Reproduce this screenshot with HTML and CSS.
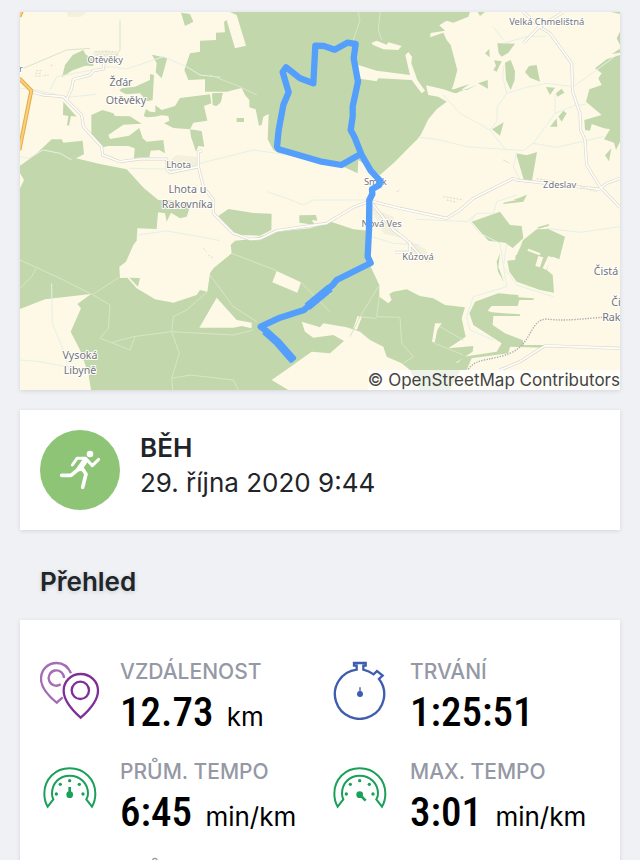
FILE: index.html
```html
<!DOCTYPE html>
<html lang="cs">
<head>
<meta charset="utf-8">
<meta name="viewport" content="width=device-width, initial-scale=1">
<title>Běh</title>
<link rel="stylesheet" href="styles.css">
</head>
<body>
<main class="page">
  <section class="card map" aria-label="Mapa trasy">
    <svg class="map-canvas" viewBox="60 36 1800 1134" role="img" aria-label="Trasa běhu">
      <g class="wood">
        <!-- northern forest -->
        <path d="M690 36H1410L1405 50 1360 68 1340 62 1318 76 1335 92 1292 99 1290 112 1330 98 1340 120 1352 135 1372 210 1360 255 1355 268 1400 270 1432 255 1365 280 1340 305 1310 328 1285 358 1262 405 1252 418 1210 460 1185 485 1140 525 1110 505 1075 480 1073 520 1030 500 960 490 835 458 820 450 803 418 806 342 790 350 785 374 777 378 767 328 748 322 748 300 735 285 725 264 680 275H615V238L565 240 553 210 570 160 600 155V122L648 120V98L675 97 672 65 680 60 705 145 738 137 710 45Z"/>
        <!-- southern forest -->
        <path d="M60 497L105 465 155 418 185 418 190 428 248 422 252 463 228 475 300 492 380 508 432 565 475 600 500 600 530 604 570 620 560 650 540 655 513 638 500 665 495 640 474 637 470 687 412 685 410 722 400 735 378 785 358 800 360 834 382 833 410 865 465 898 520 908 590 885 600 870 622 875 630 820 640 805 695 760 692 735 705 722 750 718 830 695 930 685 995 666 1060 688 1105 692 1112 800 1138 855V890L1165 910 1175 900 1168 882 1180 875 1220 868 1260 888 1300 895 1335 915 1395 922 1385 955 1397 1010 1345 1045 1420 1038 1418 1055 1365 1090 1400 1080 1375 1120 1350 1170H1260L1230 1110 1205 1090 1160 1070 1150 1040 1110 1020 1080 995 1040 982 970 970 960 982 905 965 915 995 940 1013 1000 1005 1032 1023 990 1060 935 1055 900 1080 875 1098 815 1140 865 1170H273L265 1120 240 1050 212 995 243 925 232 912 273 882 135 898 60 927Z"/>
        <path d="M186 232L195 195 218 165 250 150 256 163 280 178 280 198 255 197 215 212ZM190 305L230 350 213 348 207 378 201 375 205 348 189 345ZM543 38L570 42 580 65 555 78ZM456 164L502 174 485 235 467 217 470 190ZM450 222L462 225 458 300 440 304 420 280 378 283 358 272 365 265 405 260 450 240ZM274 345L308 330 340 340 345 348 390 349 425 371 370 374 325 405 330 417 387 407 418 384 428 415 440 425 490 420 495 460 478 450 452 452 448 472 402 474 404 445 385 438 325 438 308 442 274 408ZM485 330L525 318 540 294 630 283 634 310 612 318 622 362 580 368 570 388 520 384 492 370 508 362 505 348 485 346 464 350 440 352 431 348 438 327 450 335 466 337 466 316ZM570 388L605 393 613 440 595 438 588 455 573 410ZM636 280H668L663 305 650 318 638 315Z"/>
      </g>
      <g class="wood" transform="translate(630 0)"><path d="M80 354H102V366H80Z"/></g>
      <g class="wood" transform="translate(1260 0)">
        <path d="M173 36H195L180 48ZM195 160L208 147 209 172ZM232 130L285 131 265 158 245 170 236 160ZM222 181L245 184 230 215 220 210 228 197ZM255 188L272 180 285 213 284 240 272 270 258 240ZM327 198L350 195 360 245 330 233 315 216ZM174 250L203 240 204 266ZM95 270L148 252 110 280ZM378 261L405 263 390 285ZM408 280L425 266 433 278 412 290ZM216 388L251 367 240 407ZM415 350L430 332 440 340 425 365ZM390 380L410 355 412 380ZM288 460L320 466 351 456 336 542H312ZM555 466L574 445 567 484ZM573 36H600V42ZM575 162L600 146V158ZM590 115L600 95V135ZM600 165L560 178 525 205 545 220 535 235 545 255 508 268 498 305 545 345 493 360 495 390 510 392 515 372 552 385 570 388 552 418 582 428 588 450 600 425ZM280 600L320 585 312 600Z"/>
      </g>
      <g class="wood" transform="translate(630 570)">
        <path d="M25 78L55 57 130 69 185 71 184 120 150 137 80 134 52 110ZM268 76L318 75 322 92 305 90 315 105 268 98Z"/>
      </g>
      <g class="wood" transform="translate(1260 570)">
        <path d="M155 95L240 65 270 105 305 108 310 145 278 174 255 158 205 152ZM310 150L350 118 385 117 435 140 418 208 398 200 380 240 398 255 402 308 360 300 290 275 268 245 262 212 285 210 290 180ZM352 112L387 102 386 108 355 116ZM250 38L290 30 320 15 310 35 250 42ZM240 190L235 230 252 276 234 245 230 215ZM235 310L295 315V322L342 325 340 330 298 330 293 348 215 348 203 362 215 367 300 373V378L220 378 218 405 255 430 308 450 312 465 375 465 370 473 270 470 265 490 155 505 140 540 95 540 130 500 230 485 245 460 160 405 148 370 165 335Z"/>
      </g>
      <g class="field">
        <path d="M1115 128L1130 122 1160 134 1165 127 1205 138 1195 150 1150 148 1118 134ZM1075 195L1130 212 1230 225 1216 165 1225 156 1236 170 1234 190 1252 240 1275 272 1265 280 1235 240 1135 235 1130 244 1070 235ZM1278 256L1330 268 1365 280 1400 290 1340 305 1315 290 1285 285ZM598 983L650 893 710 960 755 968V985L725 978 700 983ZM830 813L903 847 892 878 817 847ZM980 856L995 870 990 884 977 872ZM1073 948L1086 950 1070 990 1060 985ZM1305 970L1325 970 1312 990 1304 1028 1296 1025ZM60 520L72 540 60 565Z"/>
        <path d="M640 280L668 278 660 310 645 318Z" class="wood"/>
        <path d="M325 176L362 190 358 196 322 182ZM355 198L370 202 360 232 346 228ZM385 198L400 203 378 240 368 234ZM270 195L308 155 290 195Z" transform="translate(1260 570)"/>
      </g>
      <path class="wood" d="M388 833L420 834 414 860Z"/>
      <!-- village footprints -->
      <g class="built">
        <path d="M200 36H260L240 52 205 50ZM278 155L320 150 355 160 350 190 290 190ZM500 490L530 465 590 470 595 505 510 520ZM1110 622L1180 650 1205 715 1150 700ZM1225 720L1280 750 1290 790 1240 770Z"/>
      </g>
      <!-- streams and tracks -->
      <g class="stream">
        <path d="M60 265L100 268 200 292 290 283M150 270L170 230 330 200 380 207 490 170 560 200 600 225 660 232M60 470L85 475 130 450 180 460 215 480M390 505L530 508 600 490 760 450 900 470M1260 412L1320 420 1400 440 1570 452 1600 430 1670 442 1810 410M1512 195L1508 230 1520 280 1580 262 1640 250 1720 260 1790 210 1850 165M1520 280L1492 320 1490 365 1470 390 1380 340 1330 285M1470 390L1518 450M1665 280V340L1600 430M1665 340L1720 318 1760 312M1550 460L1540 500 1560 540M1510 120L1480 80M1510 130L1580 110 1640 108M410 705L500 693 600 710 660 722M60 1080L120 1085 250 1110M155 850L157 970 190 1050 210 1120M800 575L860 595 910 615 940 600 1100 600M1115 710L1180 730 1260 735M1250 658L1400 665 1430 640 1480 640 1490 605 1550 585M1430 640L1410 665 1440 700 1500 730 1520 860 1420 890 1400 950 1410 990 1480 1020M1520 730L1510 800 1550 855 1660 890M1640 685L1740 697 1860 680"/>
      </g>
      <g class="track">
        <path d="M60 780L180 835 280 885 330 915 325 985 300 1015 335 1028 400 1010 515 995 700 1005 760 990M60 865L95 830 108 805M280 882L358 832M335 1028L390 1050 405 1010M515 995L538 1060 515 1135 518 1170M515 995L520 950 560 930 622 875M515 1135L570 1125 700 1140 715 1170M695 760L830 812M630 825L700 920 770 965M903 847L990 935M1135 860L1080 950 1050 1010M1138 890L1130 950 1200 952 1205 1030 1240 1070 1210 1090M1075 950L1130 955M1080 60L1060 120 1060 160M1075 36L1080 60M1140 36L1135 90 1145 120M630 225L720 260 770 285M360 60V150L330 190M70 205L200 150 270 145M1304 1030L1390 1065M1320 980L1390 1020"/>
      </g>
      <!-- roads -->
      <g>
        <path class="road-casing" d="M95 275L130 285 190 290 245 345 250 380 305 440 308 465 360 485 420 477 500 477 502 510 510 518 595 500 610 560 640 600 640 640 700 700 750 718 780 716 830 692 980 670 1060 622 1110 603 1200 625 1340 655 1380 630 1420 595 1540 535 1550 540 1800 568M200 298L215 265 220 238 270 225 280 212 310 207 312 190M595 500L595 455 607 452M1570 130L1618 80 1650 100 1715 190 1718 275 1740 340 1742 390 1755 420 1760 495 1800 560 1860 622M1620 80L1570 36M1620 80L1690 36M1800 565L1820 550 1860 535M1500 1110L1560 1085 1635 1037 1860 1045M1110 603L1180 690 1220 720 1260 765M1185 757H1230L1230 725"/>
        <path class="road" d="M95 275L130 285 190 290 245 345 250 380 305 440 308 465 360 485 420 477 500 477 502 510 510 518 595 500 610 560 640 600 640 640 700 700 750 718 780 716 830 692 980 670 1060 622 1110 603 1200 625 1340 655 1380 630 1420 595 1540 535 1550 540 1800 568M200 298L215 265 220 238 270 225 280 212 310 207 312 190M595 500L595 455 607 452M1570 130L1618 80 1650 100 1715 190 1718 275 1740 340 1742 390 1755 420 1760 495 1800 560 1860 622M1620 80L1570 36M1620 80L1690 36M1800 565L1820 550 1860 535M1500 1110L1560 1085 1635 1037 1860 1045M1110 603L1180 690 1220 720 1260 765M1185 757H1230L1230 725"/>
        <path class="main-casing" d="M58 235L94 272 58 450M58 50L67 30"/>
        <path class="main-road" d="M58 235L94 272 58 450M58 50L67 30"/>
        <path class="rail" d="M1405 1108C1430 1070 1480 1085 1540 1055C1600 1020 1590 960 1640 957C1700 965 1750 955 1860 948"/>
      </g>
      <g class="houses">
        <path d="M108 212H128M106 220H126M106 228H128M132 226H146M152 196H162M285 155L350 155M290 165L355 165M610 745L620 755M625 765L640 775M1330 590L1390 600M1340 600L1370 607M1510 480L1530 490M1610 536L1670 545M1740 560L1790 575M1190 575L1200 570"/>
      </g>
      <g class="labels">
        <text x="316" y="189">Otěvěky</text>
        <text class="area" x="363" y="259">Žďár</text>
        <text class="area" x="378" y="311">Otěvěky</text>
        <text x="536" y="504">Lhota</text>
        <text class="area" x="562" y="580">Lhota u</text>
        <text class="area" x="562" y="624">Rakovníka</text>
        <text x="63" y="216">r</text>
        <text x="1640" y="75">Velká Chmelištná</text>
        <text x="1679" y="565">Zdeslav</text>
        <text x="1126" y="554">Smrk</text>
        <text x="1145" y="680">Nová Ves</text>
        <text x="1254" y="780">Kůzová</text>
        <text class="area" x="240" y="1076">Vysoká</text>
        <text class="area" x="240" y="1121">Libyně</text>
        <text class="area" x="1818" y="824">Čistá</text>
        <text class="area" x="1848" y="917">Či</text>
        <text class="area" x="1834" y="962">Rak</text>
      </g>
      <path class="route" d="M882 1083L832 1025 795 990 782 980 840 953 912 930 960 886 998 855 1010 840 1112 789 1103 770 1107 690 1108 600 1117 582 1116 568 1138 555 1140 542 1112 512 1085 465 1063 410 1052 390 1058 350V320L1074 245 1061 175 1067 132 1042 128 1004 149 972 138 946 137 940 250 900 235 858 202 848 216 866 277 850 315 836 390 831 440 836 448 960 484 1024 495 1082 462"/>
      <path class="route-tail" d="M795 993L832 1026 880 1081M922 920L960 889 990 864"/>
    </svg>
    <div class="attribution">© OpenStreetMap Contributors</div>
  </section>

  <header class="card activity">
    <svg class="activity-icon" viewBox="60 90 240 240" aria-hidden="true">
      <circle cx="180" cy="210" r="120" fill="#8dc476"/>
      <circle cx="210" cy="162" r="10" fill="#fff"/>
      <g fill="none" stroke="#fff" stroke-linecap="round" stroke-linejoin="round">
        <path stroke-width="9" d="M157 195L171 175H197L217 197L236 178"/>
        <path stroke-width="11" d="M125 226H153L176 207L184 202L198 222L188 262"/>
        <path stroke-width="17" d="M194 184L179 205"/>
      </g>
    </svg>
    <div class="activity-text">
      <h1 class="activity-title">BĚH</h1>
      <time class="activity-date" datetime="2020-10-29T09:44">29. října 2020 9:44</time>
    </div>
  </header>

  <h2 class="section-title">Přehled</h2>

  <section class="card stats">
    <div class="stat">
      <svg class="stat-icon" viewBox="60 330 180 180" fill="none" stroke-width="7" aria-hidden="true">
        <g stroke="#a56db5">
          <path d="M153 370C144 350 129 339 110 339C82 339 63 360 63 387C63 410 82 435 110 458L128 442"/>
          <path d="M132 384A23 23 0 1 0 122 403"/>
        </g>
        <g stroke="#7f3097">
          <path d="M182 372C153 372 131 394 131 422C131 448 152 476 182 503C213 476 234 448 234 422C234 394 211 372 182 372Z"/>
          <circle cx="181" cy="421" r="26"/>
        </g>
      </svg>
      <div class="stat-text">
        <div class="stat-label">VZDÁLENOST</div>
        <div class="stat-value">12.73 <span class="unit">km</span></div>
      </div>
    </div>
    <div class="stat">
      <svg class="stat-icon" viewBox="30 60 180 180" fill="none" stroke="#3f5dae" stroke-width="7" aria-hidden="true">
        <path d="M110 89A74 74 0 1 0 177 117L188 107L171 93L161 103Q147 93 130 89V77H137V69H102V77H110V92"/>
        <circle cx="120" cy="162" r="9" fill="#3f5dae" stroke="none"/>
        <path stroke-width="4" d="M120 142V162"/>
      </svg>
      <div class="stat-text">
        <div class="stat-label">TRVÁNÍ</div>
        <div class="stat-value">1:25:51</div>
      </div>
    </div>
    <div class="stat">
      <svg class="stat-icon" viewBox="60 60 180 180" fill="none" stroke="#1aa159" stroke-width="6" aria-hidden="true">
        <path d="M83 200C76 188 73 176 73 161C73 117 106 85 149 85C192 85 226 117 226 161C226 176 223 188 216 200L199 178Q204 170 204 161C204 130 180 107 149 107C118 107 96 130 96 161Q96 170 100 178Z"/>
        <g fill="#1aa159" stroke="none">
          <circle cx="109" cy="162" r="5"/><circle cx="121" cy="133" r="5"/><circle cx="149" cy="122" r="5"/><circle cx="178" cy="133" r="5"/><circle cx="189" cy="162" r="5"/>
          <circle cx="149" cy="164" r="10"/>
        </g>
        <path stroke-width="8" d="M149 141V164"/>
      </svg>
      <div class="stat-text">
        <div class="stat-label">PRŮM. TEMPO</div>
        <div class="stat-value">6:45 <span class="unit">min/km</span></div>
      </div>
    </div>
    <div class="stat">
      <svg class="stat-icon" viewBox="60 60 180 180" fill="none" stroke="#1aa159" stroke-width="6" aria-hidden="true">
        <path d="M83 200C76 188 73 176 73 161C73 117 106 85 149 85C192 85 226 117 226 161C226 176 223 188 216 200L199 178Q204 170 204 161C204 130 180 107 149 107C118 107 96 130 96 161Q96 170 100 178Z"/>
        <g fill="#1aa159" stroke="none">
          <circle cx="109" cy="162" r="5"/><circle cx="121" cy="133" r="5"/><circle cx="149" cy="122" r="5"/><circle cx="178" cy="133" r="5"/><circle cx="189" cy="162" r="5"/>
          <circle cx="149" cy="164" r="10"/>
        </g>
        <path stroke-width="8" d="M149 164L167 182"/>
      </svg>
      <div class="stat-text">
        <div class="stat-label">MAX. TEMPO</div>
        <div class="stat-value">3:01 <span class="unit">min/km</span></div>
      </div>
    </div>
    <div class="stat">
      <div class="stat-icon"></div>
      <div class="stat-text">
        <div class="stat-label">PRŮM. RYCHLOST</div>
      </div>
    </div>
  </section>
</main>
</body>
</html>
```
FILE: styles.css
```css
* {
  box-sizing: border-box;
}

body {
  margin: 0;
  background: #eff1f4;
  color: #212529;
  font-family: Inter, Roboto, sans-serif;
}

.page {
  padding: 12px 20px 0;
}

.card {
  background: #fff;
  box-shadow: 0 1px 4px rgba(40, 50, 70, 0.14);
}

/* Map */
.map {
  position: relative;
  overflow: hidden;
  background: #fdf9e6;
}

.map-canvas {
  display: block;
  width: 100%;
}

.wood {
  fill: #c2d8ac;
}

.field {
  fill: #fdf9e6;
}

.built {
  fill: #f3f0dc;
}

.stream,
.track,
.road,
.road-casing,
.main-road,
.main-casing,
.rail,
.houses {
  fill: none;
  stroke-linejoin: round;
}

.stream {
  stroke: #e6f0e6;
  stroke-width: 3;
}

.track {
  stroke: #d9e5c5;
  stroke-width: 3;
}

.road-casing {
  stroke: #dbd8cf;
  stroke-width: 9;
}

.road {
  stroke: #fffefa;
  stroke-width: 5;
}

.main-casing {
  stroke: #e5ac4a;
  stroke-width: 12;
}

.main-road {
  stroke: #fad07c;
  stroke-width: 6;
}

.rail {
  stroke: #aaa;
  stroke-width: 4;
  stroke-dasharray: 4 4;
}

.houses {
  stroke: #dedacd;
  stroke-width: 3;
  stroke-dasharray: 6 4;
}

.labels {
  fill: #747474;
  stroke: #fff;
  stroke-width: 6;
  stroke-linejoin: round;
  paint-order: stroke;
  font-family: "Noto Sans", sans-serif;
  font-size: 28px;
  text-anchor: middle;
}

.labels .area {
  font-size: 32px;
}

.route,
.route-tail {
  fill: none;
  stroke: #549ffc;
  stroke-linejoin: round;
}

.route {
  stroke-width: 19;
}

.route-tail {
  stroke-width: 25;
}

.attribution {
  position: absolute;
  right: 0;
  bottom: 0;
  background: rgba(255, 255, 255, 0.7);
  color: #444;
  font-size: 17px;
  line-height: 20px;
}

/* Activity */
.activity {
  display: flex;
  gap: 20px;
  margin-top: 20px;
  padding: 20px;
}

.activity-icon {
  flex: none;
  width: 80px;
  height: 80px;
}

.activity-title,
.activity-date {
  display: block;
  margin: 0;
  font-size: 26px;
  line-height: 35px;
}

.activity-title {
  font-weight: 600;
}

.section-title {
  margin: 35px 20px 21px;
  font-size: 26px;
  font-weight: 600;
  line-height: 34px;
  text-shadow: 0 1px 4px rgba(40, 50, 70, 0.2);
}

/* Stats */
.stats {
  display: grid;
  grid-template-columns: repeat(2, minmax(0, 1fr));
  grid-auto-rows: 100px;
  column-gap: 20px;
  padding: 40px 20px 0;
}

.stat {
  display: flex;
  gap: 20px;
}

.stat-icon {
  flex: none;
  width: 60px;
  height: 60px;
}

.stat-label {
  color: #9598a5;
  font-size: 21px;
  font-weight: 500;
  line-height: 24px;
  white-space: nowrap;
}

.stat-value {
  color: #000;
  font-family: "Roboto Condensed", "Open Sans Condensed", Roboto, sans-serif;
  font-size: 41px;
  font-weight: 500;
  line-height: 56px;
  white-space: nowrap;
}

.unit {
  margin-left: 4px;
  font-family: Inter, Roboto, sans-serif;
  font-size: 26px;
  font-weight: 400;
}
```
